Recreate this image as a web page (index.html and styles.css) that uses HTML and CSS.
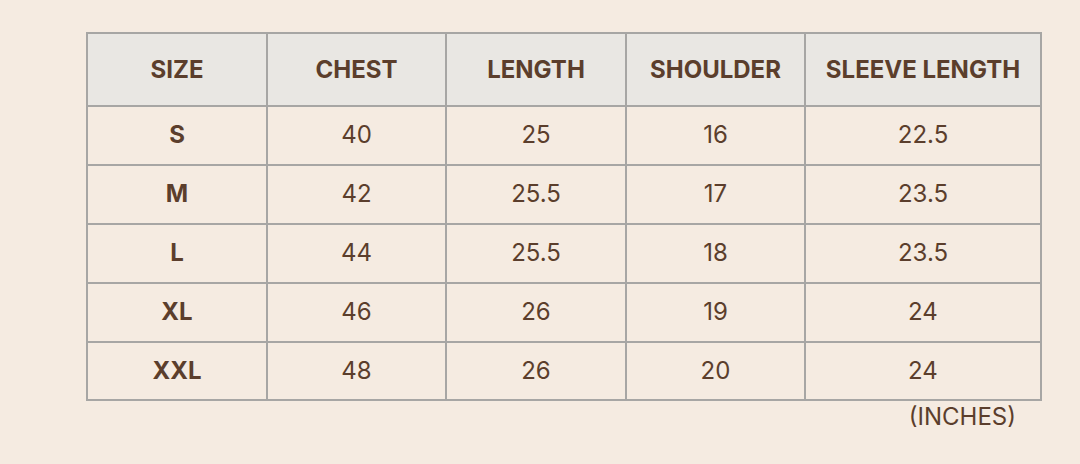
FILE: index.html
```html
<!DOCTYPE html>
<html>
<head>
<meta charset="utf-8">
<link rel="stylesheet" href="styles.css">
</head>
<body>
<div class="wrap">
  <table class="chart">
    <colgroup>
      <col class="c1"><col class="c2"><col class="c3"><col class="c4"><col class="c5">
    </colgroup>
    <thead>
      <tr><th>SIZE</th><th>CHEST</th><th>LENGTH</th><th>SHOULDER</th><th>SLEEVE LENGTH</th></tr>
    </thead>
    <tbody>
      <tr><td class="sz">S</td><td>40</td><td>25</td><td>16</td><td>22.5</td></tr>
      <tr><td class="sz">M</td><td>42</td><td>25.5</td><td>17</td><td>23.5</td></tr>
      <tr><td class="sz">L</td><td>44</td><td>25.5</td><td>18</td><td>23.5</td></tr>
      <tr><td class="sz">XL</td><td>46</td><td>26</td><td>19</td><td>24</td></tr>
      <tr><td class="sz">XXL</td><td>48</td><td>26</td><td>20</td><td>24</td></tr>
    </tbody>
  </table>
  <div class="unit">(INCHES)</div>
</div>
</body>
</html>
```

FILE: styles.css
```css
html, body {
  margin: 0;
  padding: 0;
  background: #f5ebe1;
}
body {
  font-family: Inter, "Noto Sans", sans-serif;
  color: #5b3e2c;
}
.wrap {
  width: 954px;
  margin-left: 86px;
  padding-top: 32px;
}
.chart {
  width: 954px;
  border-collapse: collapse;
  table-layout: fixed;
}
.c1 { width: 180px; }
.c2 { width: 179px; }
.c3 { width: 180px; }
.c4 { width: 179px; }
.c5 { width: 236px; }
.chart th, .chart td {
  border: 2px solid #a7a6a4;
  text-align: center;
  padding: 0;
  font-size: 24px;
  line-height: 1;
}
.chart th {
  background: #e9e7e3;
  font-weight: 700;
  height: 71px;
}
.chart td {
  height: 56.9px;
  font-weight: 400;
}
.chart td.sz {
  font-weight: 700;
}
.unit {
  text-align: right;
  padding-right: 24px;
  font-size: 24px;
  line-height: 30px;
  margin-top: 1px;
}
```
